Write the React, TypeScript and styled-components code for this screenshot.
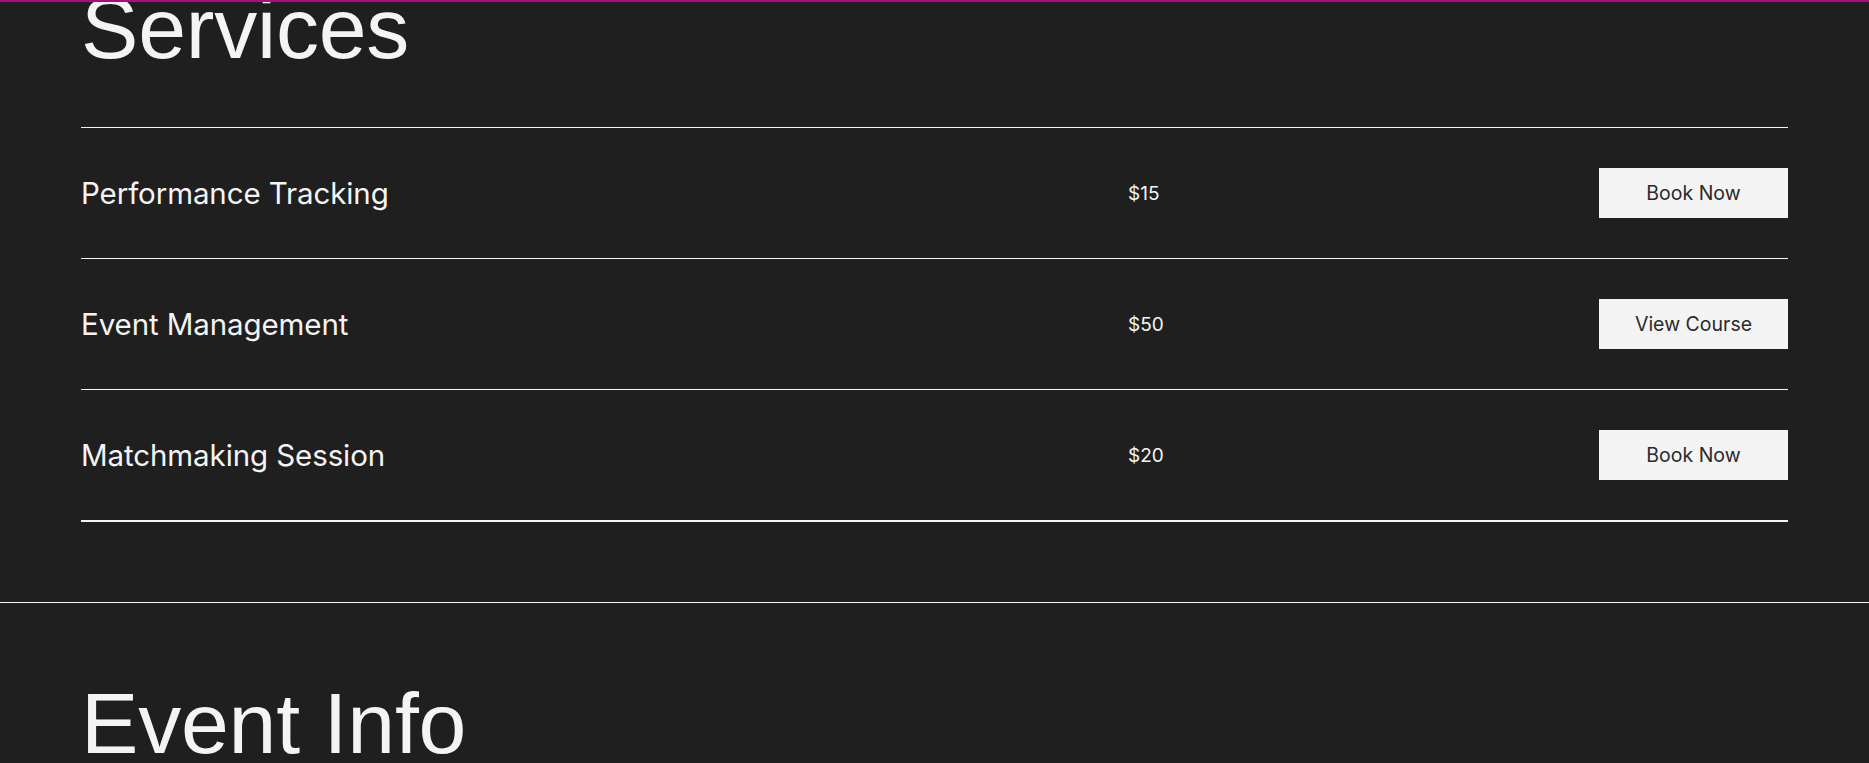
import React from "react";
import styled, { createGlobalStyle } from "styled-components";

const Global = createGlobalStyle`
  html, body {
    margin: 0;
    padding: 0;
    background: #1f1f1f;
    overflow: hidden;
  }
  * { box-sizing: border-box; }
`;

const Page = styled.div`
  width: 100%;
  height: 763px;
  background: #1f1f1f;
  border-top: 2px solid #9d1380;
  overflow: hidden;
`;

const Section = styled.section<{ $top?: number; $bottom?: number; $divider?: boolean }>`
  padding: ${(p) => p.$top ?? 0}px 81px ${(p) => p.$bottom ?? 0}px;
  border-top: ${(p) => (p.$divider ? "1px solid #f4f4f4" : "none")};
`;

const Heading = styled.h2<{ $pull?: number }>`
  margin: ${(p) => p.$pull ?? 0}px 0 0;
  font-family: "Liberation Sans", Arial, sans-serif;
  font-weight: 400;
  font-size: 86px;
  line-height: 86px;
  color: #f4f4f4;
  letter-spacing: -0.2px;
`;

const List = styled.ul`
  list-style: none;
  margin: 56px 0 0;
  padding: 0;
  border-top: 1px solid #f4f4f4;
`;

const Row = styled.li<{ $last?: boolean }>`
  display: grid;
  grid-template-columns: 1047px 1fr 189px;
  align-items: center;
  height: ${(p) => (p.$last ? 132 : 131)}px;
  border-bottom: ${(p) => (p.$last ? 2 : 1)}px solid #f4f4f4;
`;

const Name = styled.span`
  font-family: Inter, "Noto Sans", sans-serif;
  font-weight: 400;
  font-size: 29.5px;
  color: #f4f4f4;
  letter-spacing: -0.1px;
`;

const Price = styled.span`
  font-family: Inter, "Noto Sans", sans-serif;
  font-size: 19px;
  color: #f4f4f4;
`;

const Button = styled.button`
  width: 189px;
  height: 50px;
  border: none;
  border-radius: 0;
  background: #f4f4f4;
  color: #2a2a2a;
  font-family: Inter, "Noto Sans", sans-serif;
  font-size: 19.5px;
  font-weight: 400;
  cursor: pointer;
  padding: 0;
`;

const services = [
  { name: "Performance Tracking", price: "$15", action: "Book Now" },
  { name: "Event Management", price: "$50", action: "View Course" },
  { name: "Matchmaking Session", price: "$20", action: "Book Now" },
];

export default function App() {
  return (
    <>
      <Global />
      <Page>
        <Section $bottom={80}>
          <Heading $pull={-17}>Services</Heading>
          <List>
            {services.map((s, i) => (
              <Row key={s.name} $last={i === services.length - 1}>
                <Name>{s.name}</Name>
                <Price>{s.price}</Price>
                <Button>{s.action}</Button>
              </Row>
            ))}
          </List>
        </Section>
        <Section $top={77} $divider>
          <Heading>Event Info</Heading>
        </Section>
      </Page>
    </>
  );
}
